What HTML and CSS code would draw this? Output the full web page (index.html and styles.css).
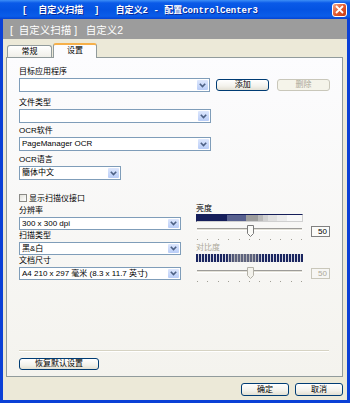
FILE: index.html
```html
<!DOCTYPE html>
<html lang="zh-CN">
<head>
    <meta charset="UTF-8">
    <meta name="viewport" content="width=device-width, initial-scale=1.0">
    <title>配置ControlCenter3</title>
    <link rel="stylesheet" href="styles.css">
</head>
<body>

<div class="window">

    <!-- Title bar -->
    <div class="titlebar">
        <span class="title">[  自定义扫描  ]   自定义2 - 配置ControlCenter3</span>
        <span class="close">
            <svg width="9" height="9" viewBox="0 0 9 9"><path d="M1 1 L8 8 M8 1 L1 8" stroke="#fff" stroke-width="1.8" fill="none"/></svg>
        </span>
    </div>

    <div class="client">
        <div class="header">[  自定义扫描 ]   自定义2</div>

        <!-- Tabs -->
        <div class="tabs">
            <div class="tab">常规</div>
            <div class="tab active">设置</div>
        </div>

        <div class="panel">
            <div class="field">
                <label>目标应用程序</label>
                <div class="row">
                    <div class="combo wide">
                        <span class="value"></span>
                        <span class="drop"><svg width="7" height="5" viewBox="0 0 7 5"><polyline points="0.8,0.8 3.5,3.6 6.2,0.8" fill="none" stroke="#4d6185" stroke-width="1.6"/></svg></span>
                    </div>
                    <button class="btn">添加</button>
                    <button class="btn" disabled>删除</button>
                </div>
            </div>

            <div class="field f-type">
                <label>文件类型</label>
                <div class="combo wide">
                    <span class="value"></span>
                    <span class="drop"><svg width="7" height="5" viewBox="0 0 7 5"><polyline points="0.8,0.8 3.5,3.6 6.2,0.8" fill="none" stroke="#4d6185" stroke-width="1.6"/></svg></span>
                </div>
            </div>

            <div class="field f-ocr">
                <label>OCR软件</label>
                <div class="combo wide">
                    <span class="value">PageManager OCR</span>
                    <span class="drop"><svg width="7" height="5" viewBox="0 0 7 5"><polyline points="0.8,0.8 3.5,3.6 6.2,0.8" fill="none" stroke="#4d6185" stroke-width="1.6"/></svg></span>
                </div>
            </div>

            <div class="field f-lang">
                <label>OCR语言</label>
                <div class="combo narrow">
                    <span class="value">簡体中文</span>
                    <span class="drop"><svg width="7" height="5" viewBox="0 0 7 5"><polyline points="0.8,0.8 3.5,3.6 6.2,0.8" fill="none" stroke="#4d6185" stroke-width="1.6"/></svg></span>
                </div>
            </div>

            <div class="check-row">
                <span class="checkbox"></span>
                <span>显示扫描仪接口</span>
            </div>

            <div class="lower">
                <div class="left-col">
                    <div class="field small">
                        <label>分辨率</label>
                        <div class="combo">
                            <span class="value">300 x 300 dpi</span>
                            <span class="drop"><svg width="7" height="5" viewBox="0 0 7 5"><polyline points="0.8,0.8 3.5,3.6 6.2,0.8" fill="none" stroke="#4d6185" stroke-width="1.6"/></svg></span>
                        </div>
                    </div>
                    <div class="field small">
                        <label>扫描类型</label>
                        <div class="combo">
                            <span class="value">黑&amp;白</span>
                            <span class="drop"><svg width="7" height="5" viewBox="0 0 7 5"><polyline points="0.8,0.8 3.5,3.6 6.2,0.8" fill="none" stroke="#4d6185" stroke-width="1.6"/></svg></span>
                        </div>
                    </div>
                    <div class="field small">
                        <label>文档尺寸</label>
                        <div class="combo">
                            <span class="value">A4 210 x 297 毫米 (8.3 x 11.7 英寸)</span>
                            <span class="drop"><svg width="7" height="5" viewBox="0 0 7 5"><polyline points="0.8,0.8 3.5,3.6 6.2,0.8" fill="none" stroke="#4d6185" stroke-width="1.6"/></svg></span>
                        </div>
                    </div>
                </div>

                <div class="right-col">
                    <label>亮度</label>
                    <div class="bar brightness"></div>
                    <div class="slider-row">
                        <div class="slider">
                            <div class="track"></div>
                            <div class="ticks"><i></i><i></i><i></i><i></i><i></i><i></i><i></i><i></i><i></i><i></i><i></i></div>
                            <svg class="thumb" width="7" height="12" viewBox="0 0 7 12"><path d="M0.5 0.5 H6.5 V8.5 L3.5 11.5 L0.5 8.5 Z" fill="#fbfbf8" stroke="#7a7a7a"/></svg>
                        </div>
                        <div class="num">50</div>
                    </div>

                    <label class="disabled">对比度</label>
                    <div class="bar contrast"></div>
                    <div class="slider-row second">
                        <div class="slider">
                            <div class="track"></div>
                            <div class="ticks"><i></i><i></i><i></i><i></i><i></i><i></i><i></i><i></i><i></i><i></i><i></i></div>
                            <svg class="thumb" width="7" height="12" viewBox="0 0 7 12"><path d="M0.5 0.5 H6.5 V8.5 L3.5 11.5 L0.5 8.5 Z" fill="#f3f2ec" stroke="#b4b2a8"/></svg>
                        </div>
                        <div class="num disabled">50</div>
                    </div>
                </div>
            </div>

            <div class="panel-foot">
                <div class="sep"></div>
                <button class="btn reset">恢复默认设置</button>
            </div>
        </div>

        <div class="actions">
            <button class="btn ok">确定</button>
            <button class="btn cancel">取消</button>
        </div>
    </div>
</div>

</body>
</html>
```

FILE: styles.css
```css
/* General */
* {
    box-sizing: border-box;
}

body {
    margin: 0;
    font-family: "Liberation Sans", "Noto Sans CJK SC", sans-serif;
    font-size: 8px;
    color: #000;
}

.window {
    width: 350px;
    height: 403px;
    background: #0b40d6;
    display: flex;
    flex-direction: column;
}

/* Title bar */
.titlebar {
    height: 19px;
    display: flex;
    align-items: center;
    padding: 0 3px 0 22px;
    background: linear-gradient(#3d8ef6 0, #0a5ae8 3px, #0453e2 50%, #0a5de9 85%, #0443d4 100%);
    color: #fff;
}

.title {
    flex: 1;
    font-family: "Liberation Mono", "Noto Sans CJK SC", monospace;
    font-size: 9px;
    font-weight: bold;
    white-space: pre;
    text-shadow: 1px 1px #0a2a9a;
}

.close {
    width: 15px;
    height: 14px;
    border: 1px solid #fff;
    border-radius: 3px;
    background: linear-gradient(135deg, #f3a98c, #e2582d 50%, #c43c14);
    display: flex;
    align-items: center;
    justify-content: center;
}

/* Client area */
.client {
    flex: 1;
    margin: 0 3px 3px;
    background: #ece9d8;
    display: flex;
    flex-direction: column;
}

.header {
    height: 20px;
    background: #9c9c9c;
    color: #fff;
    font-size: 10.5px;
    padding-left: 7px;
    display: flex;
    align-items: center;
    white-space: pre;
}

/* Tabs */
.tabs {
    height: 18px;
    display: flex;
    align-items: flex-end;
    gap: 1px;
    padding-left: 4px;
}

.tab {
    width: 45px;
    height: 12px;
    border: 1px solid #919b9c;
    border-bottom: none;
    border-radius: 3px 3px 0 0;
    background: linear-gradient(#fff, #f0efe8);
    text-align: center;
    line-height: 12px;
}

.tab.active {
    width: 44px;
    height: 15px;
    margin-bottom: -1px;
    position: relative;
    z-index: 1;
    background: #fcfcfe;
    border-top: 2px solid #f6b04a;
    line-height: 12px;
}

.panel {
    height: 320px;
    margin: 0 4px 0 3px;
    border: 1px solid #919b9c;
    background: linear-gradient(#fcfcfe, #f4f3ee);
    display: flex;
    flex-direction: column;
    padding: 8px 12px 6px 12px;
}

/* Fields */
label {
    display: block;
    height: 11px;
    line-height: 11px;
    white-space: nowrap;
}

label.disabled {
    color: #aca899;
}

.row {
    display: flex;
    align-items: center;
    margin-top: 1px;
}

.f-type {
    margin-top: 5px;
}

.f-ocr {
    margin-top: 2px;
}

.f-lang {
    margin-top: 3px;
}

.combo {
    height: 14px;
    margin-top: 1px;
    border: 1px solid #7f9db9;
    background: #fff;
    display: flex;
    align-items: stretch;
}

.row .combo {
    margin-top: 0;
}

.combo.wide {
    width: 192px;
}

.combo.narrow {
    width: 102px;
}

.value {
    flex: 1;
    padding-left: 2px;
    line-height: 12px;
    white-space: nowrap;
    overflow: hidden;
}

.drop {
    width: 11px;
    margin: 1px;
    border-radius: 1px;
    background: linear-gradient(#dde7fd, #b9cdf7);
    display: flex;
    align-items: center;
    justify-content: center;
}

/* Buttons */
.btn {
    height: 12px;
    width: 53px;
    padding: 0;
    font-family: inherit;
    font-size: 8px;
    line-height: 10px;
    color: #000;
    border: 1px solid #003c74;
    border-radius: 3px;
    background: linear-gradient(#fff, #f3f2ec 60%, #e3e0d3);
}

.row .btn {
    margin-left: 6px;
}

.row .btn + .btn {
    margin-left: 8px;
}

.btn:disabled {
    color: #aca899;
    border-color: #c9c7ba;
    background: #f5f4ea;
}

/* Checkbox */
.check-row {
    margin-top: 12px;
    height: 11px;
    display: flex;
    align-items: center;
    gap: 2px;
}

.checkbox {
    width: 8px;
    height: 8px;
    border: 1px solid #8a8a86;
    background: linear-gradient(135deg, #e2e1da, #fff);
}

/* Lower section */
.lower {
    margin-top: 2px;
    display: flex;
}

.left-col {
    width: 162px;
}

.field.small .combo {
    height: 13px;
}

.field.small .value {
    line-height: 11px;
}

.right-col {
    width: 134px;
    margin-left: 15px;
    margin-top: -2px;
}

.bar {
    width: 107px;
    height: 8px;
}

.brightness {
    border: 1px solid #d0d0d0;
    border-left-color: #151e5a;
    border-top-color: #151e5a;
    background: linear-gradient(90deg, #151e5a 0 29%, #57608e 29% 47%, #9c9c9c 47% 58%, #b9b9b9 58% 63%, #d0d0d0 63% 68%, #e0e0e0 68% 76%, #ececec 76% 86%, #f8f8f8 86% 100%);
}

.contrast {
    margin-top: 1px;
    background:
        linear-gradient(90deg, transparent 28%, rgba(150, 150, 150, 0.55) 36% 54%, transparent 62%),
        repeating-linear-gradient(90deg, #1b2660 0 2px, #d4d6e0 2px 3px);
}

.slider-row {
    display: flex;
    gap: 8px;
}

.slider-row.second {
    margin-top: 2px;
}

.slider {
    width: 107px;
    height: 20px;
    position: relative;
    display: flex;
    flex-direction: column;
}

.track {
    margin: 6px 1px 0;
    height: 3px;
    border-top: 1px solid #9d9c99;
    border-bottom: 1px solid #fff;
    background: #e4e2d8;
}

.ticks {
    margin: 8px 1px 0;
    display: flex;
    justify-content: space-between;
}

.ticks i {
    width: 1px;
    height: 1px;
    background: #a09e94;
}

.thumb {
    position: absolute;
    left: 51px;
    top: 3px;
}

.num {
    width: 19px;
    height: 11px;
    margin-top: 4px;
    border: 1px solid #808080;
    background: #fbfbf9;
    text-align: right;
    padding-right: 2px;
    line-height: 9px;
}

.num.disabled {
    color: #aca899;
    border-color: #c9c7ba;
    background: transparent;
}

/* Panel footer */
.panel-foot {
    margin-top: auto;
}

.sep {
    width: 310px;
    height: 2px;
    border-top: 1px solid #d6d3c3;
    border-bottom: 1px solid #fff;
}

.btn.reset {
    width: 80px;
    margin-top: 6px;
}

/* Dialog buttons */
.actions {
    display: flex;
    justify-content: flex-end;
    gap: 6px;
    padding: 6px 4px 0 0;
}

.actions .btn {
    height: 13px;
    width: 48px;
}
```
